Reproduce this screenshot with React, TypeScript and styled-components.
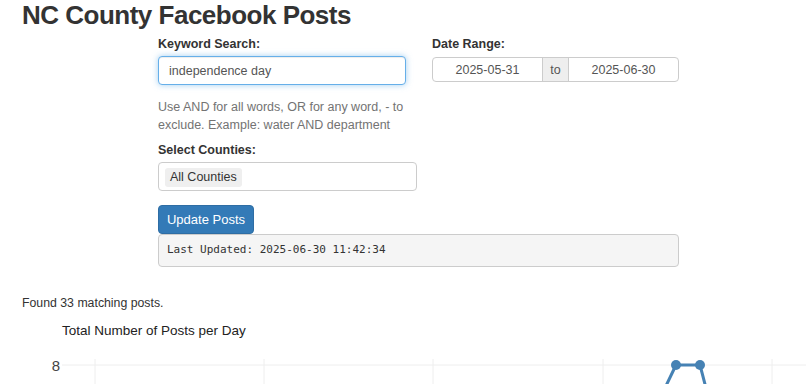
import React from 'react';
import styled, { createGlobalStyle } from 'styled-components';

const GlobalStyle = createGlobalStyle`
  html, body {
    margin: 0;
    padding: 0;
    overflow: hidden;
    background: #fff;
  }
  body {
    font-family: "Liberation Sans", Arial, sans-serif;
    color: #333;
    font-size: 12.5px;
  }
  * {
    box-sizing: border-box;
  }
`;

const gridX = [73, 242, 411, 581, 750];

const App: React.FC = () => {
  return (
    <Page>
      <GlobalStyle />
      <Title>NC County Facebook Posts</Title>
      <Form>
        <Column>
          <Label>Keyword Search:</Label>
          <KeywordInput defaultValue="independence day" />
          <Help>
            Use AND for all words, OR for any word, - to exclude. Example: water AND department
          </Help>
          <Label $spaced>Select Counties:</Label>
          <SelectBox>
            <Pill>All Counties</Pill>
          </SelectBox>
        </Column>
        <Column>
          <Label>Date Range:</Label>
          <DateGroup>
            <DateField>2025-05-31</DateField>
            <Addon>to</Addon>
            <DateField>2025-06-30</DateField>
          </DateGroup>
        </Column>
        <Actions>
          <Button type="button">Update Posts</Button>
          <Pre>Last Updated: 2025-06-30 11:42:34</Pre>
        </Actions>
      </Form>
      <Found>Found 33 matching posts.</Found>
      <ChartTitle>Total Number of Posts per Day</ChartTitle>
      <Chart width={790} height={60} viewBox="0 0 790 60">
        {gridX.map((x) => (
          <line key={x} x1={x} y1={19} x2={x} y2={60} stroke="#eee" strokeWidth={1} />
        ))}
        <line x1={40} y1={25} x2={784} y2={25} stroke="#eee" strokeWidth={1} />
        <text x={38} y={30.5} textAnchor="end" fontSize={15} fill="#444" fontFamily="Liberation Sans, Arial, sans-serif">
          8
        </text>
        <polyline
          points="630,75 654,25 678,25 691,75"
          fill="none"
          stroke="#4682b4"
          strokeWidth={3}
          strokeLinejoin="round"
        />
        <circle cx={654} cy={25} r={5} fill="#4682b4" />
        <circle cx={678} cy={25} r={5} fill="#4682b4" />
      </Chart>
    </Page>
  );
};

export default App;

const Page = styled.div`
  padding-left: 22px;
  width: 812px;
`;

const Title = styled.h1`
  margin: 0;
  font-size: 26px;
  font-weight: 700;
  letter-spacing: -0.5px;
  line-height: 30px;
  color: #333;
`;

const Form = styled.div`
  margin-left: 136px;
  margin-top: 5px;
  display: grid;
  grid-template-columns: 258px 247px;
  column-gap: 16px;
  width: 521px;
`;

const Column = styled.div`
  display: flex;
  flex-direction: column;
  align-items: flex-start;
`;

const Label = styled.label<{ $spaced?: boolean }>`
  font-weight: 700;
  font-size: 12.5px;
  line-height: 18px;
  margin-bottom: 3px;
  margin-top: ${(p) => (p.$spaced ? '7px' : '0')};
`;

const KeywordInput = styled.input`
  width: 248px;
  height: 29px;
  padding: 0 10px;
  border: 1px solid #66afe9;
  border-radius: 4px;
  font-family: "Liberation Sans", Arial, sans-serif;
  font-size: 12.5px;
  color: #555;
  outline: none;
  box-shadow: inset 0 1px 1px rgba(0, 0, 0, 0.075), 0 0 6px rgba(102, 175, 233, 0.6);
`;

const Help = styled.div`
  margin-top: 13px;
  width: 258px;
  line-height: 18px;
  color: #737373;
`;

const SelectBox = styled.div`
  width: 259px;
  height: 29px;
  padding: 5px 6px;
  border: 1px solid #ccc;
  border-radius: 4px;
  display: flex;
  align-items: flex-start;
`;

const Pill = styled.span`
  background: #efefef;
  border-radius: 3px;
  padding: 0 5px;
  line-height: 19px;
  font-size: 12.5px;
  color: #333;
`;

const DateGroup = styled.div`
  margin-top: 1px;
  width: 247px;
  height: 25px;
  display: grid;
  grid-template-columns: 1fr 27px 1fr;
  border: 1px solid #ccc;
  border-radius: 4px;
  overflow: hidden;
`;

const DateField = styled.div`
  display: flex;
  align-items: center;
  justify-content: center;
  font-size: 12.5px;
  color: #555;
`;

const Addon = styled.div`
  background: #eee;
  border-left: 1px solid #ccc;
  border-right: 1px solid #ccc;
  display: flex;
  align-items: center;
  justify-content: center;
  font-size: 12.5px;
  color: #555;
`;

const Actions = styled.div`
  grid-column: 1 / -1;
  margin-top: 14px;
  display: flex;
  flex-direction: column;
  align-items: flex-start;
`;

const Button = styled.button`
  width: 96px;
  height: 29px;
  padding: 0;
  background: #337ab7;
  border: 1px solid #2e6da4;
  border-radius: 4px;
  color: #fff;
  font-family: "Liberation Sans", Arial, sans-serif;
  font-size: 13px;
`;

const Pre = styled.pre`
  margin: 0;
  width: 521px;
  height: 33px;
  padding: 7px 8px 8px;
  background: #f5f5f5;
  border: 1px solid #ccc;
  border-radius: 4px;
  font-family: "DejaVu Sans Mono", "Liberation Mono", monospace;
  font-size: 11px;
  line-height: 16px;
  color: #333;
`;

const Found = styled.div`
  margin-top: 27px;
  line-height: 18px;
  font-size: 12.3px;
`;

const ChartTitle = styled.div`
  margin-top: 9px;
  padding-left: 40px;
  font-size: 13.5px;
  line-height: 19px;
  color: #222;
`;

const Chart = styled.svg`
  display: block;
`;
